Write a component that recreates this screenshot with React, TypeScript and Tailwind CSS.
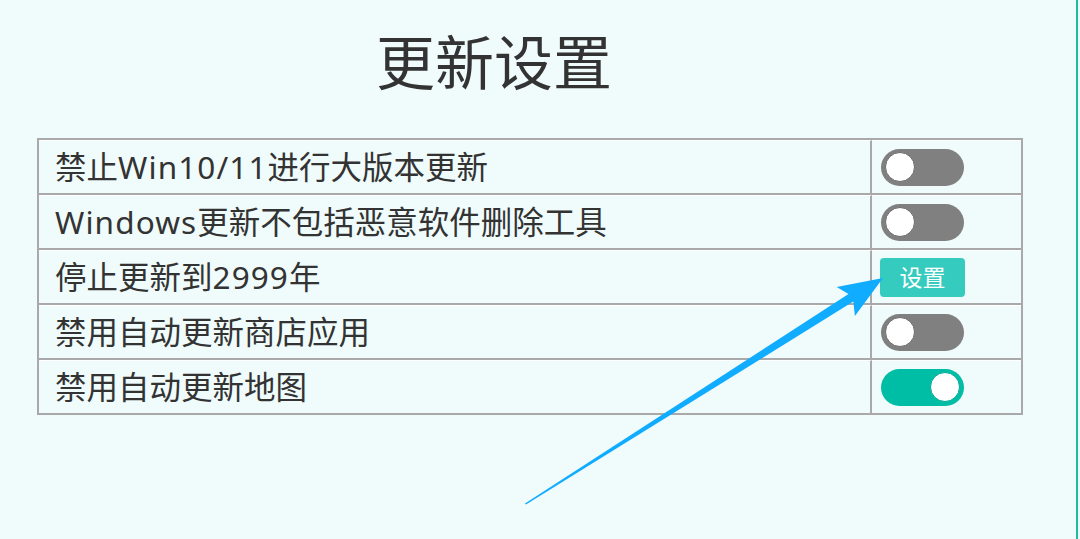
import React from "react";

const FONT = { fontFamily: '"Noto Sans", "Noto Sans CJK SC", sans-serif' };

function Toggle({ on }: { on?: boolean }) {
  return (
    <div
      className={
        "w-[83px] h-[37px] rounded-full flex items-center px-[4px] " +
        (on ? "bg-[#00bda6] justify-end" : "bg-[#808080] justify-start")
      }
    >
      <div
        className={
          "w-[30px] h-[30px] rounded-full bg-white border " +
          (on ? "border-[#00a893]" : "border-[#6a6a6a]")
        }
      />
    </div>
  );
}

type Row = { label: React.ReactNode; kind: "off" | "on" | "button" };

const L = ({ children }: { children: React.ReactNode }) => (
  <span className="tracking-[1.1px]">{children}</span>
);

const rows: Row[] = [
  { label: <>禁止<L>Win10/11</L>进行大版本更新</>, kind: "off" },
  { label: <><L>Windows</L>更新不包括恶意软件删除工具</>, kind: "off" },
  { label: <>停止更新到<L>2999</L>年</>, kind: "button" },
  { label: "禁用自动更新商店应用", kind: "off" },
  { label: "禁用自动更新地图", kind: "on" },
];

export default function App() {
  return (
    <div className="relative w-[1080px] h-[539px] overflow-hidden bg-[#f0fbfb] flex" style={FONT}>
      <div className="w-[1076px] h-full flex flex-col">
        <h1 className="mt-[33px] ml-[376px] h-[59px] text-[59px] leading-[59px] text-[#333333] font-normal whitespace-nowrap">
          更新设置
        </h1>
        <div className="mt-[46px] ml-[37px] w-[986px] border-t-2 border-x-2 border-[#a9a9a9]">
          {rows.map((r, i) => (
            <div key={i} className="flex h-[55px] border-b-2 border-[#a9a9a9]">
              <div className="w-[833px] border-t border-white border-r-2 border-r-[#a9a9a9] flex items-center pl-[16px] text-[31.5px] text-[#333333] whitespace-nowrap">
                {r.label}
              </div>
              <div className="flex-1 border-t border-white flex items-center pl-[9px]">
                {r.kind === "button" ? (
                  <div className="ml-[-1px] w-[85px] h-[39px] rounded-[4px] bg-[#35cbbe] flex items-center justify-center text-white text-[23px] leading-none">
                    设置
                  </div>
                ) : (
                  <Toggle on={r.kind === "on"} />
                )}
              </div>
            </div>
          ))}
        </div>
      </div>
      <div className="w-[2px] h-full bg-[#1cbca4]" />
      <svg
        className="absolute left-0 top-0 pointer-events-none"
        width="1080"
        height="539"
        viewBox="0 0 1080 539"
      >
        <polygon
          points="525,503.5 526,504.5 853.3,301.5 854.9,315.9 883,278 836.7,287.1 848.5,293.9"
          fill="#10acff"
        />
      </svg>
    </div>
  );
}
